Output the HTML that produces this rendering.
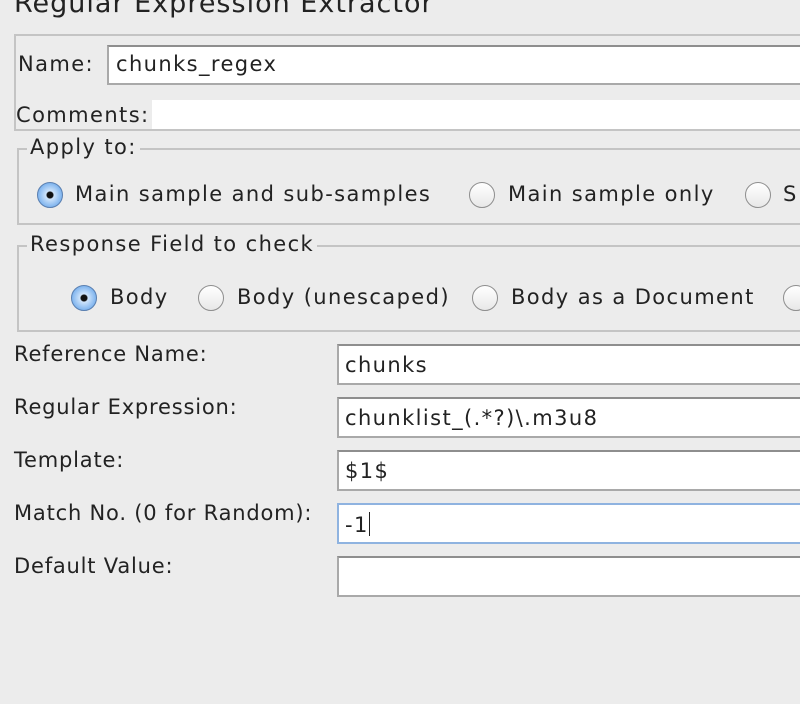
<!DOCTYPE html><html><head><style>
body{margin:0;width:800px;height:704px;background:#ececec;font-family:"DejaVu Sans","Liberation Sans",sans-serif;color:#222;position:relative;overflow:hidden;font-size:21px;letter-spacing:1.4px}
.a{position:absolute;white-space:nowrap}
.f{position:absolute;background:#fff;border:2px solid #a9a9a9;border-top-color:#8e8e8e;box-sizing:border-box}
.box{position:absolute;border:2px solid #c4c4c4;box-sizing:border-box}
.r{position:absolute;width:26px;height:26px;border-radius:50%;border:1.5px solid #8e8e8e;background:linear-gradient(#fff,#e8e8e8);box-sizing:border-box}
.r.on{background:radial-gradient(circle,#111 0 3px,#cfe4fb 4px,#7fb4ee 12px);border-color:#5a7fb0}
.lg{position:absolute;background:#ececec;padding:0 3px}
</style></head><body>
<div class="a" style="left:14px;top:-12px;font-size:27px;letter-spacing:1px;color:#222">Regular Expression Extractor</div>
<div class="box" style="left:14px;top:34px;width:800px;height:97px"></div>
<div class="a" style="left:18px;top:52px">Name:</div>
<div class="f" style="left:107px;top:45px;width:700px;height:40px"></div>
<div class="a" style="left:116px;top:52px">chunks_regex</div>
<div class="a" style="left:16px;top:103px">Comments:</div>
<div class="a" style="left:152px;top:100px;width:660px;height:29px;background:#fff"></div>
<div class="box" style="left:17px;top:148px;width:800px;height:77px"></div>
<div class="lg" style="left:27px;top:135px">Apply to:</div>
<div class="r on" style="left:37px;top:182px"></div>
<div class="a" style="left:75px;top:182px">Main sample and sub-samples</div>
<div class="r" style="left:469px;top:182px"></div>
<div class="a" style="left:508px;top:182px">Main sample only</div>
<div class="r" style="left:745px;top:182px"></div>
<div class="a" style="left:783px;top:182px">S</div>
<div class="box" style="left:17px;top:245px;width:800px;height:87px"></div>
<div class="lg" style="left:27px;top:232px">Response Field to check</div>
<div class="r on" style="left:71px;top:285px"></div>
<div class="a" style="left:110px;top:285px">Body</div>
<div class="r" style="left:198px;top:285px"></div>
<div class="a" style="left:237px;top:285px">Body (unescaped)</div>
<div class="r" style="left:472px;top:285px"></div>
<div class="a" style="left:511px;top:285px">Body as a Document</div>
<div class="r" style="left:783px;top:285px"></div>
<div class="a" style="left:14px;top:342px;letter-spacing:0.8px">Reference Name:</div>
<div class="a" style="left:14px;top:395px;letter-spacing:0.8px">Regular Expression:</div>
<div class="a" style="left:14px;top:448px;letter-spacing:0.8px">Template:</div>
<div class="a" style="left:14px;top:501px;letter-spacing:0.8px">Match No. (0 for Random):</div>
<div class="a" style="left:14px;top:554px;letter-spacing:0.8px">Default Value:</div>
<div class="f" style="left:337px;top:344px;width:470px;height:41px"></div>
<div class="a" style="left:345px;top:353px">chunks</div>
<div class="f" style="left:337px;top:397px;width:470px;height:41px"></div>
<div class="a" style="left:345px;top:406px">chunklist_(.*?)\.m3u8</div>
<div class="f" style="left:337px;top:450px;width:470px;height:41px"></div>
<div class="a" style="left:345px;top:459px">$1$</div>
<div class="f" style="left:337px;top:503px;width:470px;height:41px;border-color:#8fb3e0"></div>
<div class="a" style="left:345px;top:512px">-1<span style="display:inline-block;width:1px;height:24px;background:#222;vertical-align:-4px"></span></div>
<div class="f" style="left:337px;top:556px;width:470px;height:41px"></div>
</body></html>
